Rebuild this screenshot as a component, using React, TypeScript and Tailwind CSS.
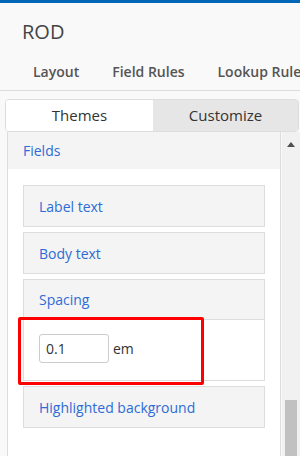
import { ReactNode } from "react";

const Item = ({ children }: { children: ReactNode }) => (
  <div className="h-[42px] flex items-center border border-[#dddddd] bg-[#f4f4f4] pl-[15px] text-[14px] text-[#2e6bd6]">
    {children}
  </div>
);

export default function App() {
  return (
    <div
      className="w-[300px] h-[456px] overflow-hidden bg-[#f9f9f9] flex flex-col"
      style={{ fontFamily: '"Open Sans", "Liberation Sans", sans-serif' }}
    >
      <div className="h-[3px] bg-[#0067b8] shrink-0" />

      {/* header */}
      <div className="h-[52px] pl-[22px] pt-[15px] text-[20px] leading-[28px] text-[#444444] shrink-0">ROD</div>
      <nav className="h-[36px] flex gap-[33px] pl-[33px] pt-[6px] border-b border-[#dddddd] text-[14px] font-semibold text-[#555555] whitespace-nowrap overflow-hidden shrink-0">
        <span>Layout</span>
        <span>Field Rules</span>
        <span>Lookup Rules</span>
      </nav>

      {/* theme tabs */}
      <div className="mt-[8px] ml-[5px] mr-[1px] h-[33px] flex rounded-[4px] border border-[#dddddd] overflow-hidden shrink-0">
        <div className="w-[147px] flex items-center justify-center bg-white text-[15px] text-[#333333]">Themes</div>
        <div className="flex-1 flex items-center justify-center bg-[#e6e6e6] text-[15px] text-[#333333]">Customize</div>
      </div>

      <div className="flex flex-1 min-h-0 ml-[7px]">
        <div className="w-[274px] border-x border-[#dddddd] bg-white flex flex-col">
          <div className="h-[37px] flex items-center bg-[#f4f4f4] pl-[15px] text-[14px] text-[#2e6bd6] shrink-0">Fields</div>
          <div className="px-[15px] pt-[16px] flex flex-col gap-[5px]">
            <Item>Label text</Item>
            <Item>Body text</Item>
            <div>
              <div className="h-[41px] flex items-center border border-[#dddddd] bg-[#f4f4f4] pl-[15px] text-[14px] text-[#2e6bd6]">Spacing</div>
              <div className="relative h-[61px] border-x border-b border-[#dddddd] bg-white pl-[15px] pt-[14px] flex items-start gap-[4px]">
                <div className="w-[70px] h-[29px] border border-[#cccccc] rounded-[3px] flex items-center pl-[6px] text-[14px] text-[#333333]">0.1</div>
                <span className="h-[29px] flex items-center text-[14px] text-[#333333]">em</span>
                <div className="absolute left-[-6px] top-[-3px] w-[186px] h-[68px] border-[3px] border-[#ff0000] rounded-[2px]" />
              </div>
            </div>
            <Item>Highlighted background</Item>
          </div>
        </div>

        {/* scrollbar */}
        <div className="flex-1 ml-[1px] bg-[#f1f1f1] flex flex-col items-center pt-[10px] relative">
          <div className="w-0 h-0 border-x-[4px] border-x-transparent border-b-[5px] border-b-[#505050]" />
          <div className="absolute left-[3px] top-[268px] w-[12px] h-[60px] bg-[#c1c1c1]" />
        </div>
      </div>
    </div>
  );
}
